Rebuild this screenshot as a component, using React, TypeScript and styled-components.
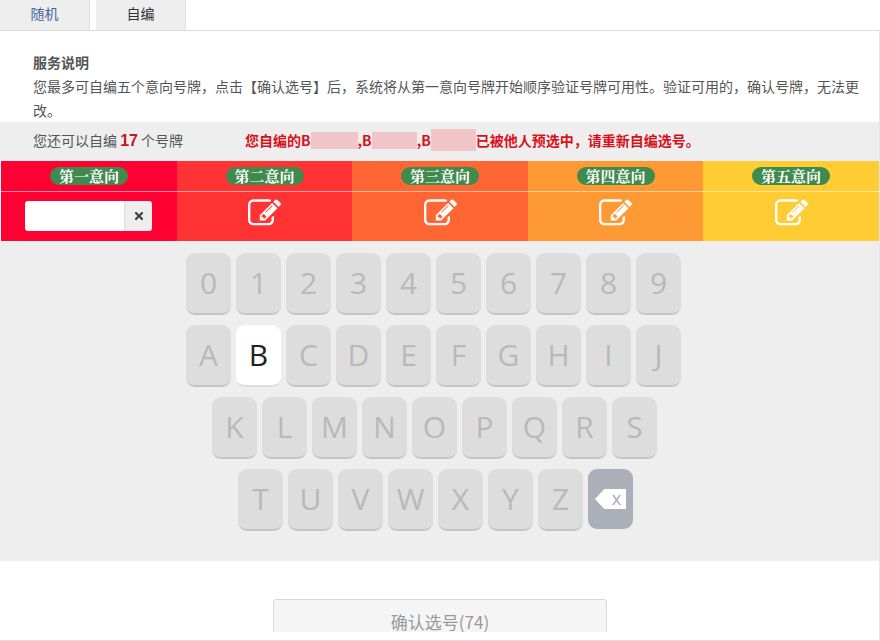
import React from "react";
import styled, { createGlobalStyle } from "styled-components";
import { FaTimes } from "react-icons/fa";

const rows = [
  { keys: "0123456789".split(""), shift: 0 },
  { keys: "ABCDEFGHIJ".split(""), shift: 0 },
  { keys: "KLMNOPQRS".split(""), shift: 26 },
  { keys: "TUVWXYZ".split(""), shift: 52 },
];

const slots = [
  { title: "第一意向", color: "#ff0033", width: 176, filled: true },
  { title: "第二意向", color: "#ff3333", width: 175, filled: false },
  { title: "第三意向", color: "#ff6633", width: 176, filled: false },
  { title: "第四意向", color: "#ff9933", width: 175, filled: false },
  { title: "第五意向", color: "#ffcc33", width: 176, filled: false },
];

const EditIcon = () => (
  <svg width="33" height="33" viewBox="0 0 1792 1792" fill="#fff">
    <path d="M888 1184l116-116-152-152-116 116v56h96v96h56zm440-720q-16-16-33 1l-350 350q-17 17-1 33t33-1l350-350q17-17 1-33zm80 594v190q0 119-84.5 203.5t-203.5 84.5h-832q-119 0-203.5-84.5t-84.5-203.5v-832q0-119 84.5-203.5t203.5-84.5h832q63 0 117 25 15 7 18 23 3 17-9 29l-49 49q-14 14-32 8-23-6-45-6h-832q-66 0-113 47t-47 113v832q0 66 47 113t113 47h832q66 0 113-47t47-113v-126q0-13 9-22l64-64q15-15 35-7t20 29zm-96-738l288 288-672 672h-288v-288zm444 132l-92 92-288-288 92-92q28-28 68-28t68 28l152 152q28 28 28 68t-28 68z" />
  </svg>
);

const App = () => {
  return (
    <Page>
      <GlobalStyle />
      <Tabs>
        <Tab>随机</Tab>
        <Tab $active>自编</Tab>
      </Tabs>
      <Panel>
        <Notice>
          <NoticeTitle>服务说明</NoticeTitle>
          <NoticeText>
            您最多可自编五个意向号牌，点击【确认选号】后，系统将从第一意向号牌开始顺序验证号牌可用性。验证可用的，确认号牌，无法更改。
          </NoticeText>
        </Notice>
        <StatusBar>
          <Remaining>
            您还可以自编 <Count>17</Count> 个号牌
          </Remaining>
          <Warning>
            您自编的B<Blur $w={47} />,B<Blur $w={45} />,B
            <Blur $w={45} $tall />
            已被他人预选中，请重新自编选号。
          </Warning>
        </StatusBar>
        <Slots>
          {slots.map((slot) => (
            <Slot key={slot.title} $color={slot.color} $width={slot.width}>
              <SlotHead>
                <Pill>{slot.title}</Pill>
              </SlotHead>
              <SlotBody>
                {slot.filled ? (
                  <InputGroup>
                    <PlateInput />
                    <ClearButton>
                      <FaTimes size={12} />
                    </ClearButton>
                  </InputGroup>
                ) : (
                  <EditIcon />
                )}
              </SlotBody>
            </Slot>
          ))}
        </Slots>
        <Keyboard>
          {rows.map((row) => (
            <KeyRow key={row.keys[0]} $shift={row.shift}>
              {row.keys.map((k) => (
                <Key key={k} $on={k === "B"}>
                  {k}
                </Key>
              ))}
              {row.keys[0] === "T" && (
                <BackKey>
                  <BackGlyph>x</BackGlyph>
                </BackKey>
              )}
            </KeyRow>
          ))}
        </Keyboard>
        <Footer>
          <Confirm>确认选号(74)</Confirm>
        </Footer>
      </Panel>
    </Page>
  );
};

export default App;

const GlobalStyle = createGlobalStyle`
  html, body {
    margin: 0;
    padding: 0;
    background: #fff;
    overflow: hidden;
  }
`;

const Page = styled.div`
  width: 880px;
  height: 641px;
  overflow: hidden;
  font-family: "Noto Sans CJK SC", "Liberation Sans", sans-serif;
  color: #555;
`;

const Tabs = styled.div`
  height: 30px;
  display: flex;
  gap: 6px;
`;

const Tab = styled.div<{ $active?: boolean }>`
  width: 90px;
  height: 30px;
  background: #eeeeee;
  border-right: ${(p) => (p.$active ? "1px solid #e4e4e4" : "1px solid #e0e0e0")};
  box-sizing: border-box;
  text-align: center;
  font-size: 14px;
  line-height: 27px;
  color: ${(p) => (p.$active ? "#333" : "#44689c")};
`;

const Panel = styled.div`
  box-sizing: border-box;
  height: 611px;
  border: 1px solid #dddddd;
  border-right-color: #e6e6e6;
  display: flex;
  flex-direction: column;
  border-left: 0;
`;

const Notice = styled.div`
  height: 91px;
  box-sizing: border-box;
  padding: 19px 20px 0 33px;
  font-size: 14px;
  line-height: 24px;
`;

const NoticeTitle = styled.div`
  font-weight: 700;
`;

const NoticeText = styled.div`
  color: #555;
`;

const StatusBar = styled.div`
  height: 39px;
  box-sizing: border-box;
  padding: 0 0 3px 33px;
  background: #eeeeee;
  display: flex;
  align-items: center;
  font-size: 14px;
`;

const Remaining = styled.div`
  width: 212px;
  color: #555;
`;

const Count = styled.b`
  color: #c8161d;
  font-size: 16px;
  font-family: "Liberation Sans", sans-serif;
`;

const Warning = styled.div`
  display: flex;
  align-items: center;
  font-weight: 700;
  color: #d9101a;
  white-space: nowrap;
`;

const Blur = styled.span<{ $w: number; $tall?: boolean }>`
  display: inline-block;
  width: ${(p) => p.$w}px;
  height: ${(p) => (p.$tall ? 22 : 17)}px;
  background: #f1c6c8;
`;

const Slots = styled.div`
  display: flex;
  height: 80px;
  padding-left: 1px;
`;

const Slot = styled.div<{ $color: string; $width: number }>`
  width: ${(p) => p.$width}px;
  background: ${(p) => p.$color};
  display: flex;
  flex-direction: column;
`;

const SlotHead = styled.div`
  height: 30px;
  border-bottom: 1px solid rgba(255, 255, 255, 0.55);
  display: flex;
  align-items: center;
  justify-content: center;
`;

const Pill = styled.span`
  width: 78px;
  height: 18px;
  border-radius: 9px;
  background: #3f8a4d;
  color: #fff;
  font-family: "Noto Serif CJK SC", "Noto Sans CJK SC", sans-serif;
  font-size: 15px;
  font-weight: 700;
  line-height: 18px;
  text-align: center;
`;

const SlotBody = styled.div`
  flex: 1;
  display: flex;
  align-items: flex-start;
  justify-content: center;
  padding-top: 5px;
`;

const InputGroup = styled.div`
  display: flex;
  height: 30px;
  margin-top: 4px;
  margin-left: -1px;
`;

const PlateInput = styled.div`
  width: 99px;
  background: #fff;
  border-radius: 3px 0 0 3px;
`;

const ClearButton = styled.div`
  width: 28px;
  background: #eeeeee;
  border-left: 1px solid #ddd;
  box-sizing: border-box;
  border-radius: 0 3px 3px 0;
  display: flex;
  align-items: center;
  justify-content: center;
  color: #444;
`;

const Keyboard = styled.div`
  height: 320px;
  box-sizing: border-box;
  background: #eeeeee;
  padding: 12px 0 0 186px;
  display: flex;
  flex-direction: column;
  gap: 10px;
`;

const KeyRow = styled.div<{ $shift: number }>`
  display: flex;
  gap: 5px;
  margin-left: ${(p) => p.$shift}px;
`;

const Key = styled.div<{ $on?: boolean }>`
  width: 45px;
  height: 60px;
  border-radius: 9px;
  background: ${(p) => (p.$on ? "#fff" : "#dddddd")};
  border-bottom: 2px solid ${(p) => (p.$on ? "#dcdcdc" : "#c4c4c4")};
  font-family: "Open Sans", sans-serif;
  font-size: 30px;
  line-height: 60px;
  text-align: center;
  color: ${(p) => (p.$on ? "#222" : "#b9b9b9")};
`;

const BackKey = styled.div`
  width: 45px;
  height: 60px;
  border-radius: 9px;
  background: #abb0b8;
  display: flex;
  align-items: center;
  justify-content: center;
`;

const BackGlyph = styled.span`
  width: 31px;
  height: 20px;
  background: #fff;
  clip-path: polygon(30% 0, 100% 0, 100% 100%, 30% 100%, 0 50%);
  box-sizing: border-box;
  padding-left: 12px;
  text-align: center;
  font-family: "Open Sans", sans-serif;
  font-size: 18px;
  line-height: 18px;
  color: #a8adb5;
`;

const Footer = styled.div`
  height: 71px;
  box-sizing: border-box;
  padding: 38px 0 0 273px;
  overflow: hidden;
`;

const Confirm = styled.div`
  width: 334px;
  height: 46px;
  box-sizing: border-box;
  background: #f5f5f5;
  border: 1px solid #d8d8d8;
  border-radius: 3px;
  text-align: center;
  font-size: 17px;
  line-height: 44px;
  color: #999;
`;
